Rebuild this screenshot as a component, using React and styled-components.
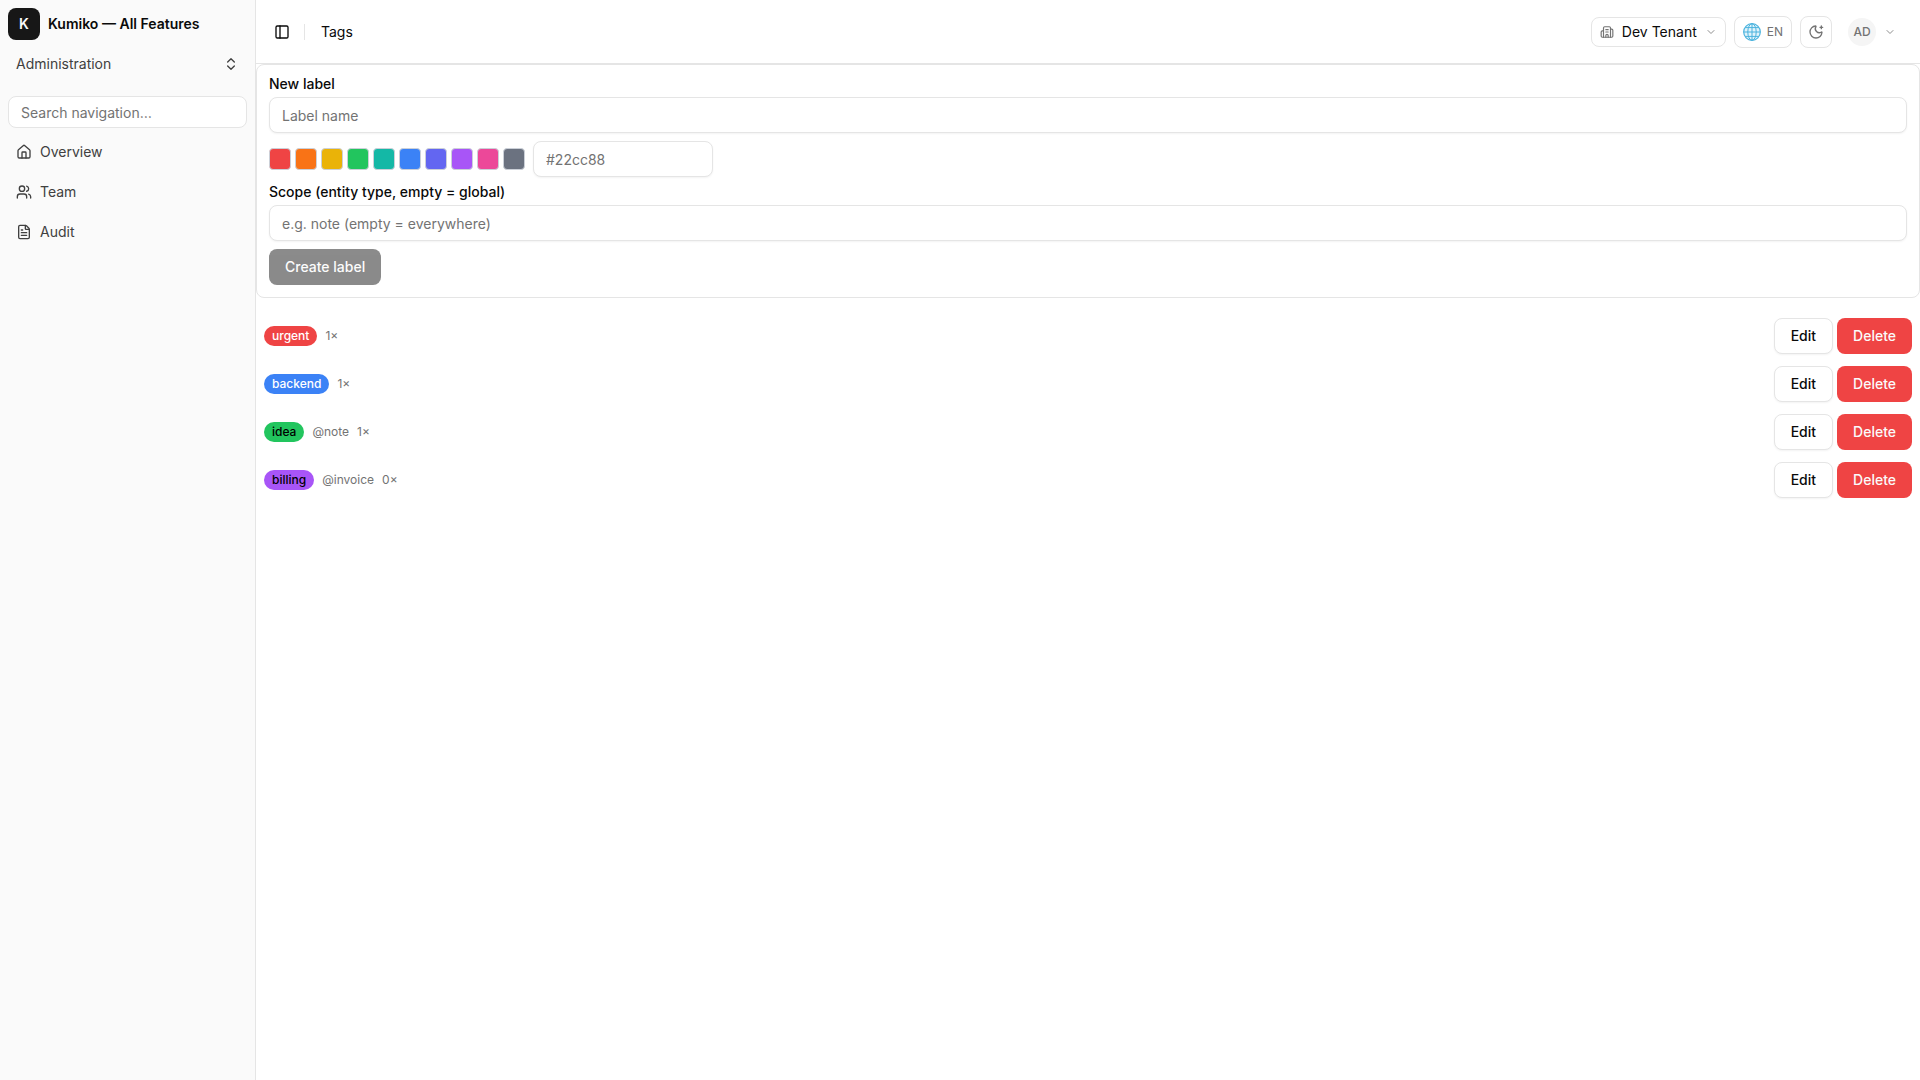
import React, { useState } from "react";
import styled, { createGlobalStyle, css } from "styled-components";
import {
  House,
  Users,
  FileText,
  ChevronsUpDown,
  ChevronDown,
  PanelLeft,
  Building2,
  MoonStar,
} from "lucide-react";

const c = {
  bg: "#ffffff",
  side: "#fafafa",
  border: "#e5e5e5",
  text: "#0a0a0a",
  soft: "#404040",
  muted: "#737373",
  primary: "#171717",
  danger: "#ef4444",
};

const GlobalStyle = createGlobalStyle`
  *, *::before, *::after { box-sizing: border-box; }
  body {
    margin: 0;
    background: ${c.bg};
    color: ${c.text};
    font-family: Inter, "Liberation Sans", sans-serif;
    font-size: 14px;
    line-height: 20px;
  }
  button, input { font: inherit; color: inherit; margin: 0; }
  button { cursor: pointer; }
  svg { display: block; flex-shrink: 0; }
`;

const Shell = styled.div`
  display: flex;
  min-height: 100vh;
`;

const Sidebar = styled.aside`
  display: flex;
  flex-direction: column;
  flex: 0 0 256px;
  background: ${c.side};
  border-right: 1px solid ${c.border};
  color: ${c.soft};
`;

const SidebarHeader = styled.div`
  display: flex;
  flex-direction: column;
  gap: 8px;
  padding: 8px;
`;

const Brand = styled.div`
  display: flex;
  align-items: center;
  gap: 8px;
  color: ${c.text};
  font-weight: 600;
`;

const Logo = styled.span`
  display: grid;
  place-items: center;
  width: 32px;
  height: 32px;
  border-radius: 8px;
  background: ${c.primary};
  color: #fafafa;
`;

const WorkspaceButton = styled.button`
  display: flex;
  align-items: center;
  justify-content: space-between;
  height: 32px;
  padding: 0 8px;
  border: 0;
  border-radius: 6px;
  background: transparent;
  color: ${c.soft};
`;

const Nav = styled.nav`
  display: flex;
  flex-direction: column;
  gap: 8px;
  padding: 8px;
`;

const SearchInput = styled.input`
  width: 100%;
  height: 32px;
  padding: 0 12px;
  border: 1px solid ${c.border};
  border-radius: 8px;
  background: ${c.bg};
  &::placeholder { color: ${c.muted}; opacity: 1; }
`;

const NavLink = styled.a`
  display: flex;
  align-items: center;
  gap: 8px;
  height: 32px;
  padding: 0 8px;
  border-radius: 6px;
  color: ${c.soft};
  text-decoration: none;
`;

const Main = styled.main`
  display: flex;
  flex-direction: column;
  flex: 1;
  min-width: 0;
`;

const Topbar = styled.header`
  display: flex;
  align-items: center;
  justify-content: space-between;
  height: 64px;
  padding: 0 16px 0 12px;
  border-bottom: 1px solid ${c.border};
`;

const TopGroup = styled.div`
  display: flex;
  align-items: center;
  gap: 8px;
`;

const IconButton = styled.button`
  display: grid;
  place-items: center;
  width: 28px;
  height: 28px;
  padding: 0;
  border: 0;
  background: transparent;
`;

const Divider = styled.span`
  width: 1px;
  height: 16px;
  margin-right: 8px;
  background: ${c.border};
`;

const Title = styled.h1`
  margin: 0;
  font-size: 14px;
  font-weight: 400;
`;

const PillButton = styled.button`
  display: flex;
  align-items: center;
  justify-content: center;
  gap: ${(p) => p.$gap || 8}px;
  min-width: 32px;
  height: ${(p) => p.$height || 32}px;
  padding: 0 ${(p) => (p.$square ? 0 : 8)}px;
  border: 1px solid ${c.border};
  border-radius: 8px;
  background: ${c.bg};
  color: ${(p) => (p.$strong ? c.text : c.muted)};
  font-size: ${(p) => (p.$strong ? 14 : 12)}px;
`;

const UserButton = styled.button`
  display: flex;
  align-items: center;
  gap: 8px;
  height: 32px;
  padding: 0 8px;
  border: 0;
  background: transparent;
  color: ${c.muted};
`;

const Avatar = styled.span`
  display: grid;
  place-items: center;
  width: 28px;
  height: 28px;
  border-radius: 50%;
  background: #f5f5f5;
  font-size: 12px;
  font-weight: 500;
`;

const Faded = styled.span`
  opacity: 0.8;
`;

const Content = styled.div`
  display: flex;
  flex-direction: column;
  gap: 16px;
`;

const Card = styled.form`
  display: flex;
  flex-direction: column;
  align-items: flex-start;
  gap: 8px;
  padding: 12px;
  border: 1px solid ${c.border};
  border-radius: 8px;
`;

const Field = styled.div`
  display: flex;
  flex-direction: column;
  gap: 6px;
  width: 100%;
`;

const Label = styled.label`
  font-weight: 500;
  line-height: 14px;
`;

const TextInput = styled.input`
  width: ${(p) => p.$width || "100%"};
  height: 36px;
  padding: 0 12px;
  border: 1px solid ${c.border};
  border-radius: 8px;
  background: ${c.bg};
  box-shadow: 0 1px 2px rgba(0, 0, 0, 0.05);
  &::placeholder { color: ${c.muted}; opacity: 1; }
`;

const ColorRow = styled.div`
  display: flex;
  align-items: center;
  gap: 8px;
`;

const Swatches = styled.div`
  display: flex;
  gap: 4px;
`;

const Swatch = styled.button`
  width: 22px;
  height: 22px;
  padding: 0;
  border: 1px solid #cbd0d8;
  border-radius: 4px;
  background: ${(p) => p.$color};
`;

const variants = {
  primary: css`
    background: ${c.primary};
    color: #fafafa;
  `,
  outline: css`
    border: 1px solid ${c.border};
    background: ${c.bg};
    color: ${c.text};
    box-shadow: 0 1px 2px rgba(0, 0, 0, 0.05);
  `,
  danger: css`
    background: ${c.danger};
    color: #fafafa;
  `,
};

const Button = styled.button`
  height: 36px;
  padding: 0 16px;
  border: 0;
  border-radius: 8px;
  font-weight: 500;
  ${(p) => variants[p.$variant]}
  &:disabled { opacity: 0.5; cursor: default; }
`;

const TagList = styled.ul`
  display: flex;
  flex-direction: column;
  gap: 4px;
  margin: 0;
  padding: 0;
  list-style: none;
`;

const TagRow = styled.li`
  display: flex;
  align-items: center;
  gap: 8px;
  padding: 4px 8px;
  color: ${c.muted};
  font-size: 12px;
  line-height: 16px;
`;

const Chip = styled.span`
  padding: 2px 8px;
  border-radius: 10px;
  background: ${(p) => p.$color};
  color: ${(p) => p.$ink};
  font-weight: 500;
`;

const Actions = styled.div`
  display: flex;
  gap: 4px;
  margin-left: auto;
  font-size: 14px;
`;

function Globe() {
  return (
    <svg width="18" height="18" viewBox="0 0 18 18" fill="none" stroke="#4bb3de" aria-hidden="true">
      <circle cx="9" cy="9" r="8.3" fill="#e0f3fb" strokeWidth="1.2" />
      <ellipse cx="9" cy="9" rx="4.2" ry="8.3" strokeWidth="1" />
      <path d="M9 .7v16.6M.7 9h16.6M2.2 4.6h13.6M2.2 13.4h13.6" strokeWidth="1" />
    </svg>
  );
}

const navItems = [
  { label: "Overview", Icon: House },
  { label: "Team", Icon: Users },
  { label: "Audit", Icon: FileText },
];

const palette = [
  "#ef4444", "#f97316", "#eab308", "#22c55e", "#14b8a6",
  "#3b82f6", "#6366f1", "#a855f7", "#ec4899", "#6b7280",
];

const tags = [
  { name: "urgent", color: "#ef4444", ink: "#fff", count: 1 },
  { name: "backend", color: "#3b82f6", ink: "#fff", count: 1 },
  { name: "idea", color: "#22c55e", ink: "#000", scope: "note", count: 1 },
  { name: "billing", color: "#a855f7", ink: "#000", scope: "invoice", count: 0 },
];

export default function App() {
  const [name, setName] = useState("");
  const [color, setColor] = useState("");

  return (
    <>
      <GlobalStyle />
      <Shell>
        <Sidebar>
          <SidebarHeader>
            <Brand>
              <Logo>K</Logo>
              <span>Kumiko — All Features</span>
            </Brand>
            <WorkspaceButton type="button">
              Administration
              <ChevronsUpDown size={16} />
            </WorkspaceButton>
          </SidebarHeader>
          <Nav>
            <SearchInput type="search" aria-label="Search navigation" placeholder="Search navigation…" />
            {navItems.map(({ label, Icon }) => (
              <NavLink key={label} href="#">
                <Icon size={16} />
                {label}
              </NavLink>
            ))}
          </Nav>
        </Sidebar>
        <Main>
          <Topbar>
            <TopGroup>
              <IconButton type="button" aria-label="Toggle sidebar">
                <PanelLeft size={16} />
              </IconButton>
              <Divider />
              <Title>Tags</Title>
            </TopGroup>
            <TopGroup>
              <PillButton type="button" $strong $height={30}>
                <Building2 size={14} color={c.muted} />
                Dev Tenant
                <Faded><ChevronDown size={12} color={c.muted} /></Faded>
              </PillButton>
              <PillButton type="button" $gap={6}>
                <Globe />
                EN
              </PillButton>
              <PillButton type="button" aria-label="Toggle theme" $square>
                <MoonStar size={16} />
              </PillButton>
              <UserButton type="button">
                <Avatar>AD</Avatar>
                <Faded><ChevronDown size={12} /></Faded>
              </UserButton>
            </TopGroup>
          </Topbar>
          <Content>
            <Card onSubmit={(e) => e.preventDefault()}>
              <Field>
                <Label htmlFor="label-name">New label</Label>
                <TextInput
                  id="label-name"
                  placeholder="Label name"
                  value={name}
                  onChange={(e) => setName(e.target.value)}
                />
              </Field>
              <ColorRow>
                <Swatches>
                  {palette.map((p) => (
                    <Swatch key={p} type="button" aria-label={p} $color={p} onClick={() => setColor(p)} />
                  ))}
                </Swatches>
                <TextInput
                  $width="180px"
                  aria-label="Color"
                  placeholder="#22cc88"
                  value={color}
                  onChange={(e) => setColor(e.target.value)}
                />
              </ColorRow>
              <Field>
                <Label htmlFor="label-scope">Scope (entity type, empty = global)</Label>
                <TextInput id="label-scope" placeholder="e.g. note (empty = everywhere)" />
              </Field>
              <Button $variant="primary" disabled={!name}>Create label</Button>
            </Card>
            <TagList>
              {tags.map((t) => (
                <TagRow key={t.name}>
                  <Chip $color={t.color} $ink={t.ink}>{t.name}</Chip>
                  {t.scope && <span>@{t.scope}</span>}
                  <span>{t.count}×</span>
                  <Actions>
                    <Button type="button" $variant="outline">Edit</Button>
                    <Button type="button" $variant="danger">Delete</Button>
                  </Actions>
                </TagRow>
              ))}
            </TagList>
          </Content>
        </Main>
      </Shell>
    </>
  );
}
